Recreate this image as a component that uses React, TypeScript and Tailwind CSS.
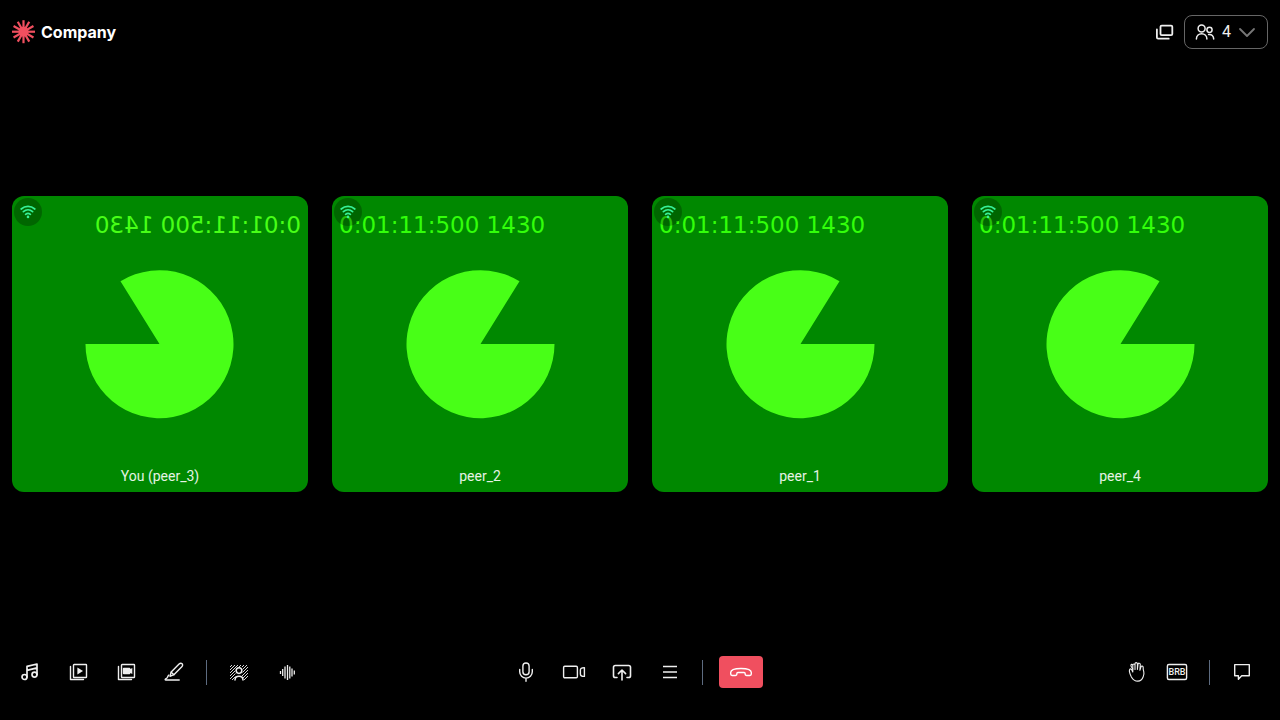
import type { ReactNode } from "react";

type IconProps = { children: ReactNode; className?: string };

function Icon({ children, className = "" }: IconProps) {
  return (
    <svg
      viewBox="0 0 24 24"
      className={`size-6 shrink-0 ${className}`}
      fill="none"
      stroke="currentColor"
      strokeWidth="1.4"
      strokeLinecap="round"
      strokeLinejoin="round"
      aria-hidden="true"
    >
      {children}
    </svg>
  );
}

function MusicIcon() {
  return (
    <Icon>
      <circle cx="6.5" cy="17" r="2.5" strokeWidth="1.7" />
      <circle cx="16.5" cy="14.6" r="2.5" strokeWidth="1.7" />
      <path strokeWidth="1.7" d="M9 17V6.400L19 4v10.600M9 10.400l10-2.500" />
    </Icon>
  );
}

function PlaylistIcon() {
  return (
    <Icon>
      <rect x="7.5" y="4.5" width="13" height="13" rx="0.6" />
      <path d="M4.500 6.500v13h13" />
      <path d="M11.400 7.500v7l5.600-3.500z" fill="currentColor" stroke="none" />
    </Icon>
  );
}

function VideoListIcon() {
  return (
    <Icon>
      <rect x="7.5" y="4.5" width="13" height="13" rx="0.6" />
      <path d="M4.500 6.500v13h13" />
      <path
        d="M9.800 7.800h5.600q1 0 1 1.200l1.900-1v6l-1.900-1q0 1.200-1 1.200H9.800q-1 0-1-1V8.800q0-1 1-1z"
        fill="currentColor"
        stroke="none"
      />
    </Icon>
  );
}

function PenIcon() {
  return (
    <Icon>
      <path d="M8 16.300l1.200-4.300 7.900-7.900c1-1 2.300-1 3-.3s.7 2-.3 3l-7.900 7.900z" />
      <path d="M9.200 12.200l2.700 2.500" />
      <path d="M6.800 15.200c-1.500.9-.6 2.700-3.200 3.700-.7.400-.5 1.100.2 1.100h13.400" />
    </Icon>
  );
}

function BackgroundIcon() {
  return (
    <Icon>
      <g strokeWidth="0.9" strokeLinecap="butt">
        <path d="M3 7l2-2M3 10l5-5M3 13l8-8M3 16l5.400-5.400M3 19l5.500-5.500M5 20l3.500-3.500M12 7l2-2M15 7l2-2M15.500 9.500L20 5M15.500 12.500L21 7M15 16l6-6M16 18l5-5M17 20l4-4" />
      </g>
      <circle cx="12" cy="10.6" r="2.8" strokeWidth="1.5" />
      <path strokeWidth="1.5" d="M8 20c.2-5 7.800-5 8 0" />
    </Icon>
  );
}

function WaveIcon() {
  return (
    <Icon>
      <path
        strokeWidth="1.3"
        strokeLinecap="butt"
        d="M5.500 11v3M7.700 9v7M10 6.500v12M12.500 5v15M14.800 6.500v12M17 8.500v8M19.300 10.500v4"
      />
    </Icon>
  );
}

function MicIcon() {
  return (
    <Icon>
      <rect x="8.9" y="3" width="6.2" height="11.8" rx="3.1" />
      <path d="M5.700 9.500v2.300a6.300 6.300 0 0 0 12.600 0V9.500M12 18.200v3" />
    </Icon>
  );
}

function CameraIcon() {
  return (
    <Icon>
      <rect x="1.6" y="6.2" width="13.8" height="11.6" rx="1.2" />
      <path d="M22.400 7.600v8.800c-2.100 0-4-1-4-2.500v-3.800c0-1.500 1.900-2.500 4-2.500z" />
    </Icon>
  );
}

function ShareIcon() {
  return (
    <Icon>
      <path
        strokeWidth="1.6"
        d="M7 17.500H5.300a1.800 1.800 0 0 1-1.800-1.800V7.300a1.800 1.800 0 0 1 1.800-1.800h13.400a1.800 1.800 0 0 1 1.800 1.800v8.400a1.800 1.800 0 0 1-1.800 1.800H17M12 20V10M8.400 13.600l3.600-3.600 3.600 3.600"
      />
    </Icon>
  );
}

function MenuIcon() {
  return (
    <Icon>
      <path strokeLinecap="butt" d="M5 6.500h14M5 12h14M5 17.500h14" />
    </Icon>
  );
}

function HangUpIcon() {
  return (
    <Icon>
      <path d="M1.700 12.600C1.700 9.800 6 8.500 12 8.500s10.300 1.300 10.300 4.100v1.500c0 .8-.6 1.400-1.400 1.400h-3.400c-.8 0-1.400-.6-1.400-1.400v-.8c0-.5-.4-.8-1-.8H8.900c-.6 0-1 .3-1 .8v.8c0 .8-.6 1.400-1.400 1.400H3.100c-.8 0-1.400-.6-1.400-1.400z" />
    </Icon>
  );
}

function HandIcon() {
  return (
    <Icon>
      <path
        strokeWidth="1.1"
        d="M7.800 12V5.200c0-1.600 2.200-1.600 2.200 0v4.300-5.700c0-1.600 2.300-1.600 2.400 0v5.700l.6-5.300c.2-1.500 2.300-1.300 2.300.3l-.4 5.800 1.100-3.400c.5-1.400 2.300-.9 2.200.6-.2 1.400.1 2.600.6 4.300.5 2 .1 3.400-.6 5-.8 2.300-2.400 4.300-5.400 4.300-3.600 0-5-1.700-6.400-4.200-.9-1.700-1.700-3.500-2-5.600-.1-1.400.4-2.400 1.200-2.400.9 0 1.300.7 2.200 3.100"
      />
      <path strokeWidth="1.1" d="M7.800 9C6.800 7.600 5.600 6.200 5.900 5.100c.3-.9 1.300-.9 1.900-.2" />
    </Icon>
  );
}

function BrbIcon() {
  return (
    <Icon>
      <rect x="2.4" y="4.5" width="19.2" height="15" rx="1.500" />
      <text
        x="12"
        y="15.300"
        textAnchor="middle"
        fill="currentColor"
        stroke="none"
        className="font-[Roboto,sans-serif] text-[9px] font-medium"
      >
        BRB
      </text>
    </Icon>
  );
}

function ChatIcon() {
  return (
    <Icon>
      <path d="M4.700 4.600h14.600v11.200h-7.600l-3.300 3.400v-3.400H4.700z" />
    </Icon>
  );
}

function StackIcon() {
  return (
    <Icon>
      <rect x="8.5" y="5.6" width="11.8" height="9.6" rx="1.2" strokeWidth="1.8" />
      <path strokeWidth="1.8" d="M4.900 9.500v8q0 1.200 1.200 1.200h10.600" />
    </Icon>
  );
}

function PeopleIcon() {
  return (
    <Icon>
      <circle cx="8.6" cy="8.6" r="3.5" strokeWidth="1.5" />
      <path strokeWidth="1.5" d="M3.400 19c0-7 10.500-7 10.500 0" />
      <circle cx="16.5" cy="9.8" r="2.6" strokeWidth="1.5" />
      <path strokeWidth="1.5" d="M15.600 14.500c3.200-.4 5 1.400 5.100 4.500" />
    </Icon>
  );
}

function WifiIcon() {
  return (
    <svg viewBox="0 0 16 14" className="h-3.5 w-4" fill="none" stroke="currentColor" strokeWidth="1.7" strokeLinecap="round" aria-hidden="true">
      <path d="M1.200 4c4-3.600 9.600-3.600 13.600 0M3.400 6.700c2.700-2.500 6.500-2.500 9.200 0M5.600 9.300c1.400-1.200 3.400-1.200 4.800 0" />
      <circle cx="8" cy="11.9" r="1.3" fill="currentColor" stroke="none" />
    </svg>
  );
}

const rays = [0, 30, 60, 90, 120, 150];

function Logo() {
  return (
    <div className="flex items-center gap-[5px]">
      <svg viewBox="0 0 24 24" className="size-6 text-[#f04f5f]" stroke="currentColor" strokeWidth="2.2" aria-hidden="true">
        {rays.map((a) => (
          <path key={a} d="M11.500.2v23" transform={`rotate(${a} 11.500 11.700)`} />
        ))}
        <circle cx="11.5" cy="11.7" r="5" fill="currentColor" stroke="none" />
      </svg>
      <span className="font-[Inter,sans-serif] text-base font-bold text-white">Company</span>
    </div>
  );
}

function Tile({ name, mirrored = false }: { name: string; mirrored?: boolean }) {
  return (
    <article className="relative flex aspect-square flex-col justify-end overflow-hidden rounded-xl bg-[#008800]">
      <div className={mirrored ? "absolute inset-0 -scale-x-100 text-[#48ff17]" : "absolute inset-0 text-[#32ff0a]"}>
        <svg viewBox="0 0 296 296" className="absolute inset-0 size-full" aria-hidden="true">
          <path d="M148.500 148h74a74 74 0 1 1-35-62.700z" fill="#48ff17" />
        </svg>
        <p className="relative pt-[15px] pl-[7px] font-['DejaVu_Sans',sans-serif] text-[23px] leading-7 whitespace-nowrap">
          0:01:11:500 1430
        </p>
      </div>
      <span className="absolute top-0.5 left-0.5 flex size-7 items-center justify-center rounded-full bg-black/25 text-[#36f097]">
        <WifiIcon />
      </span>
      <h2 className="relative pb-1.5 text-center text-sm text-white/90">{name}</h2>
    </article>
  );
}

function Tool({ label, children }: { label: string; children: ReactNode }) {
  return (
    <button type="button" aria-label={label} className="flex h-8 w-10 items-center justify-center rounded">
      {children}
    </button>
  );
}

function Divider() {
  return <div className="mx-3 h-[25px] w-px bg-[#5d6b80]" />;
}

export default function App() {
  return (
    <div className="flex min-h-screen flex-col bg-black font-[Roboto,sans-serif] text-[#efefef]">
      <header className="flex h-16 items-center justify-between px-3">
        <Logo />
        <div className="flex items-center">
          <button type="button" aria-label="Picture in picture" className="flex w-8 items-center">
            <StackIcon />
          </button>
          <button
            type="button"
            aria-label="4 participants"
            className="flex items-center rounded-lg border border-[#666] px-2 py-1"
          >
            <PeopleIcon />
            <span className="pl-[5px] text-base leading-6">4</span>
            <svg viewBox="0 0 24 24" className="ml-1 size-6 text-[#777]" fill="none" stroke="currentColor" strokeWidth="1.800" strokeLinecap="round" strokeLinejoin="round" aria-hidden="true">
              <path d="M5 9l7 7 7-7" />
            </svg>
          </button>
        </div>
      </header>

      <main className="grid flex-1 grid-cols-4 content-center gap-6 px-3">
        <Tile name="You (peer_3)" mirrored />
        <Tile name="peer_2" />
        <Tile name="peer_1" />
        <Tile name="peer_4" />
      </main>

      <footer className="grid h-24 grid-cols-[1fr_auto_1fr] items-center">
        <div className="flex items-center pl-2.5">
          <div className="flex gap-2">
            <Tool label="Music mode"><MusicIcon /></Tool>
            <Tool label="Playlist"><PlaylistIcon /></Tool>
            <Tool label="Video playlist"><VideoListIcon /></Tool>
            <Tool label="Whiteboard"><PenIcon /></Tool>
          </div>
          <Divider />
          <div className="flex gap-2">
            <Tool label="Virtual background"><BackgroundIcon /></Tool>
            <Tool label="Noise suppression"><WaveIcon /></Tool>
          </div>
        </div>
        <div className="flex items-center pr-[11px]">
          <div className="flex gap-2">
            <Tool label="Microphone"><MicIcon /></Tool>
            <Tool label="Camera"><CameraIcon /></Tool>
            <Tool label="Share screen"><ShareIcon /></Tool>
            <Tool label="More options"><MenuIcon /></Tool>
          </div>
          <Divider />
          <button
            type="button"
            aria-label="Leave call"
            className="ml-1 flex h-8 w-11 items-center justify-center rounded bg-[#f04f5f] text-white"
          >
            <HangUpIcon />
          </button>
        </div>
        <div className="flex items-center justify-end pr-[18px]">
          <Tool label="Raise hand"><HandIcon /></Tool>
          <Tool label="Be right back"><BrbIcon /></Tool>
          <Divider />
          <Tool label="Chat"><ChatIcon /></Tool>
        </div>
      </footer>
    </div>
  );
}
